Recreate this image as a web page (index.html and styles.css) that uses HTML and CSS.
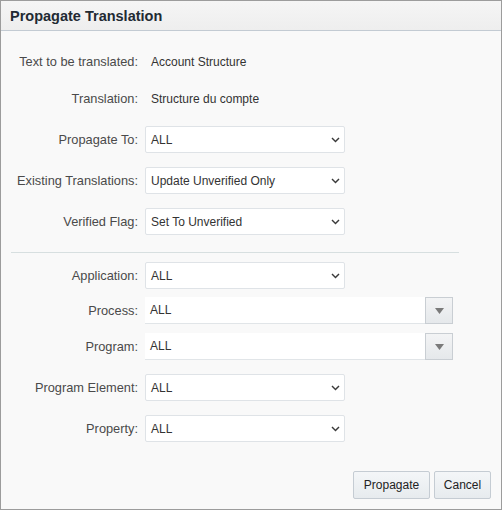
FILE: index.html
```html
<!DOCTYPE html>
<html>
<head>
<meta charset="utf-8">
<link rel="stylesheet" href="styles.css">
</head>
<body>
<div class="dialog">
  <div class="header">Propagate Translation</div>
  <div class="body">
    <div class="row text-row r1">
      <div class="label">Text to be translated:</div>
      <div class="value">Account Structure</div>
    </div>
    <div class="row text-row r2">
      <div class="label">Translation:</div>
      <div class="value">Structure du compte</div>
    </div>
    <div class="row sel-row">
      <div class="label">Propagate To:</div>
      <div class="select"><span>ALL</span><svg class="chev" width="9" height="6" viewBox="0 0 9 6"><path d="M1 1 L4.5 4.6 L8 1" fill="none" stroke="#3a3a3a" stroke-width="1.4"/></svg></div>
    </div>
    <div class="row sel-row">
      <div class="label">Existing Translations:</div>
      <div class="select"><span>Update Unverified Only</span><svg class="chev" width="9" height="6" viewBox="0 0 9 6"><path d="M1 1 L4.5 4.6 L8 1" fill="none" stroke="#3a3a3a" stroke-width="1.4"/></svg></div>
    </div>
    <div class="row sel-row">
      <div class="label">Verified Flag:</div>
      <div class="select"><span>Set To Unverified</span><svg class="chev" width="9" height="6" viewBox="0 0 9 6"><path d="M1 1 L4.5 4.6 L8 1" fill="none" stroke="#3a3a3a" stroke-width="1.4"/></svg></div>
    </div>
    <div class="divider"></div>
    <div class="row sel-row r-app">
      <div class="label">Application:</div>
      <div class="select"><span>ALL</span><svg class="chev" width="9" height="6" viewBox="0 0 9 6"><path d="M1 1 L4.5 4.6 L8 1" fill="none" stroke="#3a3a3a" stroke-width="1.4"/></svg></div>
    </div>
    <div class="row combo-row r-proc">
      <div class="label">Process:</div>
      <div class="combo"><div class="combo-input">ALL</div><div class="combo-btn"><svg width="9" height="6" viewBox="0 0 9 6"><path d="M0 0 L9 0 L4.5 6 Z" fill="#7a7a7a"/></svg></div></div>
    </div>
    <div class="row combo-row r-prog">
      <div class="label">Program:</div>
      <div class="combo"><div class="combo-input">ALL</div><div class="combo-btn"><svg width="9" height="6" viewBox="0 0 9 6"><path d="M0 0 L9 0 L4.5 6 Z" fill="#7a7a7a"/></svg></div></div>
    </div>
    <div class="row sel-row">
      <div class="label">Program Element:</div>
      <div class="select"><span>ALL</span><svg class="chev" width="9" height="6" viewBox="0 0 9 6"><path d="M1 1 L4.5 4.6 L8 1" fill="none" stroke="#3a3a3a" stroke-width="1.4"/></svg></div>
    </div>
    <div class="row sel-row">
      <div class="label">Property:</div>
      <div class="select"><span>ALL</span><svg class="chev" width="9" height="6" viewBox="0 0 9 6"><path d="M1 1 L4.5 4.6 L8 1" fill="none" stroke="#3a3a3a" stroke-width="1.4"/></svg></div>
    </div>
  </div>
  <div class="footer">
    <button class="btn btn-prop">Propagate</button>
    <button class="btn btn-cancel">Cancel</button>
  </div>
</div>
</body>
</html>
```
FILE: styles.css
```css
html, body {
  margin: 0;
  padding: 0;
  background: #ffffff;
}
body {
  font-family: "Liberation Sans", Arial, sans-serif;
  font-size: 12px;
  color: #333333;
}
.dialog {
  box-sizing: border-box;
  width: 502px;
  height: 510px;
  border: 1px solid #9c9c9c;
  background: #f9f9f9;
  display: flex;
  flex-direction: column;
}
.header {
  height: 29px;
  border-bottom: 1px solid #c3cbd3;
  background: linear-gradient(#f5f5f5, #eeeeee);
  font-size: 14.5px;
  font-weight: bold;
  color: #222a33;
  padding-left: 9px;
  line-height: 31px;
  flex: none;
}
.body {
  flex: 1;
  display: flex;
  flex-direction: column;
}
.row {
  display: flex;
  align-items: center;
}
.label {
  width: 137px;
  text-align: right;
  color: #4a4a4a;
  font-size: 12.8px;
  flex: none;
}
.value {
  margin-left: 13px;
  color: #333333;
}
.text-row {
  height: 27px;
}
.r1 { margin-top: 17px; }
.r2 { margin-top: 10px; }
.sel-row {
  height: 27px;
  margin-top: 14px;
}
.select {
  box-sizing: border-box;
  margin-left: 7px;
  width: 200px;
  height: 27px;
  background: #ffffff;
  border: 1px solid #dfe3e7;
  border-radius: 2px;
  display: flex;
  align-items: center;
  justify-content: space-between;
  padding: 0 4px 0 5px;
  color: #333333;
}
.chev {
  display: block;
}
.divider {
  margin: 17px 42px 0 10px;
  height: 1px;
  background: #d7dfe0;
}
.sel-row.r-app { margin-top: 9px; }
.combo-row {
  height: 27px;
}
.r-proc { margin-top: 8px; }
.r-prog { margin-top: 9px; }
.combo {
  margin-left: 7px;
  display: flex;
  height: 27px;
}
.combo-input {
  box-sizing: border-box;
  width: 280px;
  height: 27px;
  background: #ffffff;
  border-bottom: 1px solid #e1e5e8;
  padding-left: 5px;
  line-height: 26px;
  color: #333333;
}
.combo-btn {
  box-sizing: border-box;
  width: 28px;
  height: 27px;
  border: 1px solid #c9ced3;
  background: linear-gradient(#f3f4f5, #e5e8eb);
  display: flex;
  align-items: center;
  justify-content: center;
}
.footer {
  flex: none;
  display: flex;
  justify-content: flex-end;
  gap: 4px;
  padding: 0 10px 10px 0;
}
.btn {
  box-sizing: border-box;
  height: 28px;
  border: 1px solid #c5ccd3;
  border-radius: 2px;
  background: linear-gradient(#f4f6f8, #e7ebee);
  font-family: "Liberation Sans", Arial, sans-serif;
  font-size: 12px;
  color: #222222;
  padding: 0;
}
.btn-prop { width: 77px; }
.btn-cancel { width: 57px; }
```
